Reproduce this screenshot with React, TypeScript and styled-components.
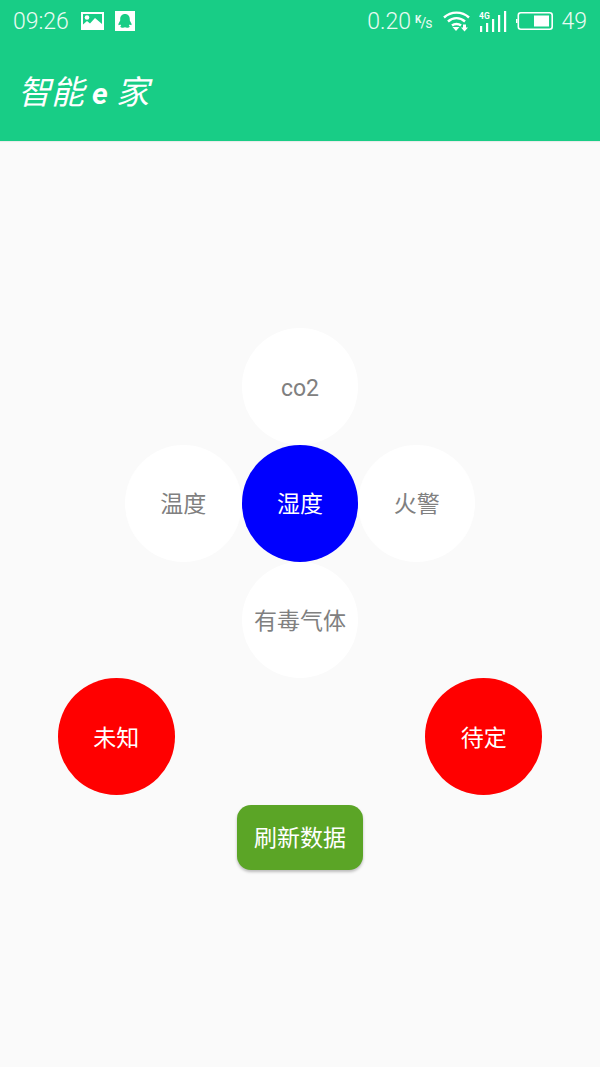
import styled, { createGlobalStyle } from "styled-components";

const GlobalStyle = createGlobalStyle`
  html, body {
    margin: 0;
    padding: 0;
    background: #fafafa;
  }
  body {
    font-family: "Roboto", "Noto Sans CJK SC", sans-serif;
  }
`;

const Screen = styled.div`
  width: 600px;
  height: 1067px;
  overflow: hidden;
  background: #fafafa;
`;

const Header = styled.header`
  height: 141px;
  background: #18cd86;
  color: #fff;
  box-shadow: 0 1px 1px rgba(0, 0, 0, 0.06);
`;

const StatusBar = styled.div`
  height: 42px;
  padding: 0 13px;
  display: flex;
  align-items: center;
  justify-content: space-between;
  font-size: 23px;
  font-weight: 300;
  color: #e9fbf3;
`;

const StatusGroup = styled.div<{ $gap: number }>`
  display: flex;
  align-items: center;
  gap: ${(p) => p.$gap}px;
`;

const Clock = styled.span`
  margin-right: 1px;
`;

const Speed = styled.span`
  display: flex;
  align-items: center;
  margin-right: 3px;
`;

const SpeedUnit = styled.span`
  font-size: 14px;
  font-weight: 400;
  margin-left: 4px;
  letter-spacing: -1px;
  line-height: 14px;
  padding-top: 3px;

  sup {
    font-size: 10px;
    font-weight: 700;
    line-height: 0;
    vertical-align: 5px;
  }
`;

const BatteryLevel = styled.span`
  margin-left: -1px;
`;

const Title = styled.h1`
  margin: 0;
  padding: 28px 0 0 18px;
  font-size: 33px;
  line-height: 45px;
  font-weight: 400;
  font-style: italic;
  white-space: pre;

  b {
    font-weight: 700;
    font-size: 30px;
  }
`;

const Content = styled.main`
  padding-top: 187.33px;
  display: flex;
  flex-direction: column;
  align-items: center;
`;

const Cross = styled.div`
  display: grid;
  grid-template-columns: repeat(3, 116.67px);
  grid-auto-rows: 116.67px;
`;

const Circle = styled.div<{ $fill: string; $ink: string; $col?: number; $latin?: boolean }>`
  grid-column: ${(p) => p.$col ?? "auto"};
  box-sizing: border-box;
  width: 116.67px;
  height: 116.67px;
  border-radius: 50%;
  background: ${(p) => p.$fill};
  color: ${(p) => p.$ink};
  display: flex;
  align-items: center;
  justify-content: center;
  font-size: 23px;
  white-space: nowrap;
  padding: ${(p) => (p.$latin ? "4px 0 0" : "0 0 2px")};
`;

const RedRow = styled.div`
  width: 484px;
  display: flex;
  justify-content: space-between;
`;

const RefreshButton = styled.button`
  width: 126px;
  height: 65px;
  margin-top: 10px;
  padding: 0 0 2px;
  border: none;
  border-radius: 14px;
  background: #5ba526;
  color: #fff;
  font-family: inherit;
  font-size: 23px;
  box-shadow: 0 2px 3px rgba(0, 0, 0, 0.25);
`;

function PictureIcon() {
  return (
    <svg width="23" height="18" viewBox="0 0 23 18">
      <path
        fill="#fff"
        fillRule="evenodd"
        d="M0 0h23v18H0zM2 2v10.5l4-3.5 3 2.5L14 6l7 6V2z"
      />
      <circle cx="6" cy="5.5" r="2.3" fill="#fff" />
    </svg>
  );
}

function QqIcon() {
  return (
    <svg width="20" height="20" viewBox="0 0 20 20">
      <path
        fill="#fff"
        fillRule="evenodd"
        d="M0 0h20v20H0zM10 3c-3 0-4.8 2.2-4.8 5v1.4L3.6 12.6c-.5 1.3 0 2 .8 1.5l.9-.7.9 1.3-1 .9c.1.9 1.6 1.2 2.8 1.2 .8 0 1.4-.2 2-.5 .6.3 1.2.5 2 .5 1.2 0 2.7-.3 2.8-1.2l-1-.9.9-1.3.9.7c.8.5 1.3-.2.8-1.5l-1.6-3.2V8c0-2.8-1.8-5-4.8-5z"
      />
    </svg>
  );
}

function WifiIcon() {
  return (
    <svg width="27" height="22" viewBox="0 0 27 22" fill="none" stroke="#fff" strokeWidth="2.4">
      <path d="M1 7.5C8 1 19 1 26 7.5" />
      <path d="M5 11.5C10 7 17 7 22 11.5" />
      <path d="M9 15.5C11.5 13.4 15.5 13.4 18 15.5" />
      <path fill="#fff" stroke="none" d="M9.5 17h7l-3.5 4z" />
      <path fill="#fff" stroke="none" d="M20 14.5h3v3h2l-3.5 4-3.5-4h2z" />
    </svg>
  );
}

function SignalIcon() {
  return (
    <svg width="28" height="21" viewBox="0 0 28 21" fill="#fff">
      <rect x="1" y="15" width="2.2" height="6" />
      <rect x="7" y="12" width="2.2" height="9" />
      <rect x="13" y="8" width="2.2" height="13" />
      <rect x="19" y="4" width="2.2" height="17" />
      <rect x="25" y="0" width="2.2" height="21" />
      <text x="0" y="8" fontSize="8.5" fontWeight="700" fontFamily="Roboto, sans-serif">
        4G
      </text>
    </svg>
  );
}

function BatteryIcon() {
  return (
    <svg width="37" height="18" viewBox="0 0 37 18">
      <rect x="0" y="7" width="1.5" height="4" fill="#fff" />
      <rect x="2.3" y="0.8" width="33.9" height="16.4" rx="2.5" fill="none" stroke="#fff" strokeWidth="1.6" />
      <rect x="18" y="3.5" width="15" height="11" fill="#fff" />
    </svg>
  );
}

export default function App() {
  return (
    <Screen>
      <GlobalStyle />
      <Header>
        <StatusBar>
          <StatusGroup $gap={11}>
            <Clock>09:26</Clock>
            <PictureIcon />
            <QqIcon />
          </StatusGroup>
          <StatusGroup $gap={9}>
            <Speed>
              0.20
              <SpeedUnit>
                <sup>K</sup>/s
              </SpeedUnit>
            </Speed>
            <WifiIcon />
            <SignalIcon />
            <BatteryIcon />
            <BatteryLevel>49</BatteryLevel>
          </StatusGroup>
        </StatusBar>
        <Title>
          智能 <b>e</b> 家
        </Title>
      </Header>
      <Content>
        <Cross>
          <Circle $fill="#fff" $ink="#808080" $col={2} $latin>
            co2
          </Circle>
          <Circle $fill="#fff" $ink="#808080" $col={1}>
            温度
          </Circle>
          <Circle $fill="#0000ff" $ink="#fff">
            湿度
          </Circle>
          <Circle $fill="#fff" $ink="#808080">
            火警
          </Circle>
          <Circle $fill="#fff" $ink="#808080" $col={2}>
            有毒气体
          </Circle>
        </Cross>
        <RedRow>
          <Circle $fill="#ff0000" $ink="#fff">
            未知
          </Circle>
          <Circle $fill="#ff0000" $ink="#fff">
            待定
          </Circle>
        </RedRow>
        <RefreshButton>刷新数据</RefreshButton>
      </Content>
    </Screen>
  );
}
